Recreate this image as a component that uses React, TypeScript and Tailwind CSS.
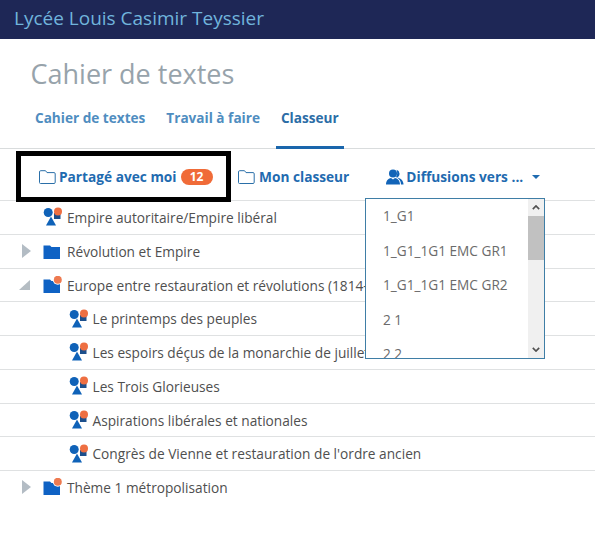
const font = { fontFamily: '"Open Sans", sans-serif' };

function Folder({ className = "" }: { className?: string }) {
  return (
    <svg viewBox="0 0 17 14" className={"w-[17px] h-[14px] " + className} fill="none" stroke="#2a6fa8" strokeWidth="1">
      <path d="M1.5 13.5 H15 a1.2 1.2 0 0 0 1.2-1.2 V3.8 A1.2 1.2 0 0 0 15 2.6 H8 L6.5 .7 H1.7 A1.2 1.2 0 0 0 .5 1.9 V12.5 a1 1 0 0 0 1 1z" />
    </svg>
  );
}

function Shapes() {
  return (
    <svg viewBox="0 0 20 20" className="w-[20px] h-[20px] shrink-0">
      <circle cx="5.2" cy="5.5" r="4.5" fill="#0f62b8" />
      <path d="M8 9.5 L13 18.5 H3 Z" fill="#0f62b8" />
      <rect x="11" y="6" width="6.5" height="6" fill="#1c4f8c" />
      <circle cx="15" cy="4.5" r="4" fill="#ee6f42" />
    </svg>
  );
}

function BlueFolder({ dot }: { dot?: boolean }) {
  return (
    <svg viewBox="0 0 20 18" className="w-[20px] h-[18px] shrink-0">
      <path d="M.5 3.5 H7 L8.5 5 H17 V17 H.5 Z" fill="#0f62c4" />
      {dot && <circle cx="14.8" cy="3.8" r="5" fill="#fff" />}
      {dot && <circle cx="14.8" cy="3.8" r="4" fill="#ee7a50" />}
    </svg>
  );
}

function Row({ kind, text, indent, arrow }: { kind: "shapes" | "folder" | "folderDot"; text: string; indent?: boolean; arrow?: "right" | "down" }) {
  return (
    <div className="h-[33.75px] flex items-center border-t border-[#dfe1e2] text-[13.7px] text-[#4f4f4f] whitespace-nowrap overflow-hidden">
      <div className="w-[43px] shrink-0 flex justify-end pr-[12px]">
        {arrow === "right" && <div className="w-0 h-0 border-y-[7px] border-y-transparent border-l-[9px] border-l-[#b3bcc4]" />}
        {arrow === "down" && <svg viewBox="0 0 12 12" className="w-[12px] h-[12px]"><path d="M11 1 V11 H0 Z" fill="#b5bdc3" /></svg>}
      </div>
      <div className={(indent ? "ml-[25.5px] " : "") + "flex items-center gap-[4px]"}>
        {kind === "shapes" ? <Shapes /> : <BlueFolder dot={kind === "folderDot"} />}
        <span className="pt-[2px]">{text}</span>
      </div>
    </div>
  );
}

export default function App() {
  const items = ["1_G1", "1_G1_1G1 EMC GR1", "1_G1_1G1 EMC GR2", "2 1", "2 2"];
  return (
    <div style={font} className="relative w-[595px] h-[545px] bg-white overflow-hidden">
      <header className="h-[39px] bg-[#1e2756] flex items-center pl-[14px] pb-[2px] text-[19px] text-[#70b4dc]">Lycée Louis Casimir Teyssier</header>
      <h1 className="pl-[30.5px] pt-[16px] text-[27px] leading-[38px] text-[#97a3ab]">Cahier de textes</h1>
      <nav className="mt-[8px] h-[48px] border-b border-[#d9dcdd] flex pl-[35px] text-[13.6px] font-bold text-[#4f8dc0]">
        <span className="pt-[7px]">Cahier de textes</span>
        <span className="pt-[7px] ml-[21px]">Travail à faire</span>
        <span className="pt-[7px] ml-[16px] px-[5px] h-[48px] border-b-[3px] border-[#1a66ac] text-[#2c6da6]">Classeur</span>
      </nav>
      <div className="h-[51px] flex items-center text-[13.7px] font-bold text-[#1f6bb0]">
        <div className="relative z-10 self-start ml-[16px] w-[215px] h-[51px] mt-[2px] border-[5px] border-black flex items-center pl-[18px] shrink-0">
          <Folder />
          <span className="ml-[3px] pt-[1px]">Partagé avec moi</span>
          <span className="ml-[4px] w-[32px] h-[16px] rounded-full bg-[#f06b38] text-white text-[12px] leading-[16px] text-center">12</span>
        </div>
        <div className="ml-[7px] mt-[5px] flex items-center">
          <Folder />
          <span className="ml-[4px] pt-[1px]">Mon classeur</span>
        </div>
        <div className="ml-[37px] mt-[5px] flex items-center">
          <svg viewBox="0 0 18 16" className="w-[18px] h-[16px]" fill="#1264b8">
            <circle cx="7" cy="4.5" r="4" />
            <path d="M0 15.5 C0 11 3 9.5 5 9 L7 10.5 L9 9 C11 9.5 14 11 14 15.5 Z" />
            <path d="M10.5 .8 A4 4 0 0 1 11 8.4 C14 9 17.5 11 17.5 15.5 H15 C15 12 13 9.5 10 8 C11.5 6 11.5 3 10.5 .8Z" />
          </svg>
          <span className="ml-[2px] pt-[1px]">Diffusions vers ...</span>
          <div className="ml-[9px] w-0 h-0 border-x-[4px] border-x-transparent border-t-[4px] border-t-[#1f6bb0]" />
        </div>
      </div>
      <Row kind="shapes" text="Empire autoritaire/Empire libéral" />
      <Row kind="folder" arrow="right" text="Révolution et Empire" />
      <Row kind="folderDot" arrow="down" text="Europe entre restauration et révolutions (1814-1848)" />
      <Row kind="shapes" indent text="Le printemps des peuples" />
      <Row kind="shapes" indent text="Les espoirs déçus de la monarchie de juillet" />
      <Row kind="shapes" indent text="Les Trois Glorieuses" />
      <Row kind="shapes" indent text="Aspirations libérales et nationales" />
      <Row kind="shapes" indent text="Congrès de Vienne et restauration de l'ordre ancien" />
      <Row kind="folderDot" arrow="right" text="Thème 1 métropolisation" />

      <div className="absolute left-[365px] top-[198px] w-[180px] h-[161px] z-20 bg-white border border-[#3f7ea6] flex overflow-hidden">
        <div className="flex-1 overflow-hidden text-[13.65px] text-[#6b6b6b]">
          {items.map((t) => (
            <div key={t} className="h-[34.5px] leading-[34.5px] pl-[17px] whitespace-nowrap">{t}</div>
          ))}
        </div>
        <div className="w-[16px] bg-[#f0f0f0] flex flex-col">
          <div className="h-[17px] flex items-center justify-center">
            <svg viewBox="0 0 10 6" className="w-[8px] h-[5px]" fill="none" stroke="#505050" strokeWidth="2"><path d="M1 5 L5 1 L9 5" /></svg>
          </div>
          <div className="h-[44px] bg-[#c1c1c1]" />
          <div className="flex-1" />
          <div className="h-[17px] flex items-center justify-center">
            <svg viewBox="0 0 10 6" className="w-[8px] h-[5px]" fill="none" stroke="#505050" strokeWidth="2"><path d="M1 1 L5 5 L9 1" /></svg>
          </div>
        </div>
      </div>
    </div>
  );
}
